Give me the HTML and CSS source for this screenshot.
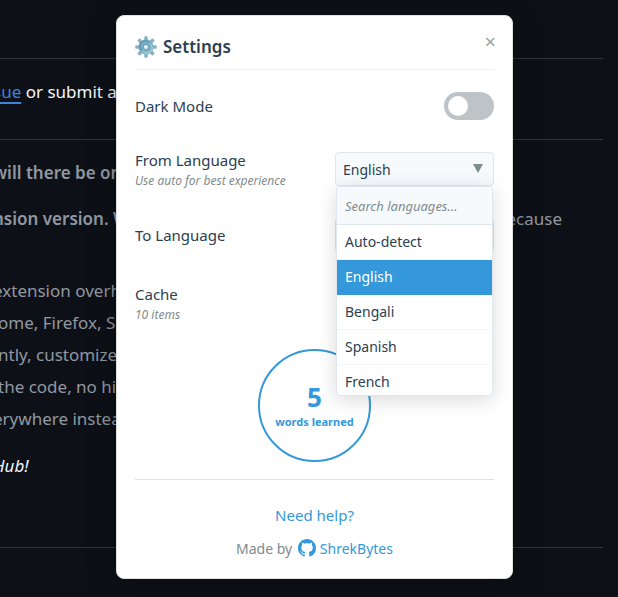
FILE: index.html
```html
<!DOCTYPE html>
<html lang="en">
<head>
<meta charset="utf-8">
<title>Settings</title>
<link rel="stylesheet" href="styles.css">
</head>
<body>
<main class="article">
  <hr>
  <p class="lead"><a href="#issue">sue</a> or submit a</p>
  <hr>
  <div class="quote">
    <p><strong>will there be on</strong></p>
    <p class="split"><strong>nsion version. W</strong><span>because</span></p>
    <ul>
      <li class="cut">extension overh</li>
      <li>ome, Firefox, S</li>
      <li>ntly, customize</li>
      <li>the code, no hid</li>
      <li class="cut">erywhere instea</li>
    </ul>
  </div>
  <p class="closing"><em>Hub!</em></p>
  <hr>
</main>
<div class="overlay">
  <section class="modal" role="dialog" aria-labelledby="title">
    <header class="header">
      <svg class="gear" viewBox="0 0 22 22" aria-hidden="true">
        <g fill="#82b2c6">
          <circle cx="11" cy="11" r="7.500"/>
          <g id="teeth"><path d="M9 5 9.500.3h3L13 5zM9 17l.5 4.700h3L13 17z"/><path d="M5 9 .3 9.500v3L5 13zM17 9l4.700.5v3L17 13z"/></g>
          <use href="#teeth" transform="rotate(45 11 11)"/>
        </g>
        <path d="M6.500 14A5.300 5.300 0 0 1 14 6.500" fill="none" stroke="#5a94ad" stroke-width="1.500"/>
        <path d="M15.500 8a5.300 5.300 0 0 1-7.500 7.500" fill="none" stroke="#a5cbd9" stroke-width="1.200"/>
        <circle cx="11" cy="11" r="3.500" fill="#6da3ba"/>
        <circle cx="11" cy="11" r="2" fill="#e8f2f6"/>
      </svg>
      <h1 id="title">Settings</h1>
      <button class="close" type="button" aria-label="Close">×</button>
    </header>
    <div class="rows">
      <div class="row">
        <label for="dark">Dark Mode</label>
        <input class="toggle" id="dark" type="checkbox" role="switch">
      </div>
      <div class="row">
        <div class="text">
          <label for="from">From Language</label>
          <small>Use auto for best experience</small>
        </div>
        <div class="picker">
          <select id="from"><option>English</option></select>
          <span class="arrow" aria-hidden="true"></span>
          <div class="menu">
            <input class="search" type="text" placeholder="Search languages..." aria-label="Search languages">
            <ul class="options" role="listbox" aria-label="Languages">
              <li role="option">Auto-detect</li>
              <li role="option" class="selected" aria-selected="true">English</li>
              <li role="option">Bengali</li>
              <li role="option">Spanish</li>
              <li role="option">French</li>
            </ul>
          </div>
        </div>
      </div>
      <div class="row">
        <label for="to">To Language</label>
        <div class="picker">
          <select id="to"></select>
        </div>
      </div>
      <div class="row cache">
        <div class="text">
          <span>Cache</span>
          <small>10 items</small>
        </div>
      </div>
    </div>
    <div class="stats">
      <strong>5</strong>
      <span>words learned</span>
    </div>
    <footer class="footer">
      <a href="#help">Need help?</a>
      <p>Made by
        <a href="#author"><svg viewBox="0 0 16 16" aria-hidden="true"><path fill="currentColor" d="M8 0C3.580 0 0 3.580 0 8c0 3.540 2.290 6.530 5.470 7.590.4.070.55-.17.55-.38 0-.19-.01-.82-.01-1.490-2.010.37-2.530-.49-2.690-.94-.09-.23-.48-.94-.82-1.130-.28-.15-.68-.52-.01-.53.63-.01 1.080.58 1.230.82.72 1.210 1.870.87 2.330.66.07-.52.28-.87.51-1.070-1.780-.2-3.640-.89-3.640-3.950 0-.87.31-1.590.82-2.150-.08-.2-.36-1.020.08-2.120 0 0 .67-.21 2.200.82.64-.18 1.320-.27 2-.27s1.360.09 2 .27c1.530-1.040 2.200-.82 2.200-.82.44 1.100.16 1.920.08 2.120.51.56.82 1.270.82 2.150 0 3.070-1.870 3.750-3.650 3.950.29.25.54.73.54 1.480 0 1.070-.01 1.930-.01 2.200 0 .21.15.46.55.38A8.010 8.010 0 0 0 16 8c0-4.420-3.580-8-8-8z"/></svg>ShrekBytes</a>
      </p>
    </footer>
  </section>
</div>
</body>
</html>
```

FILE: styles.css
```css
* { box-sizing: border-box; }
body {
  margin: 0;
  background: #0d1117;
  font-family: "Noto Sans", sans-serif;
  font-size: 15px;
  overflow: hidden;
}
p, h1, ul { margin: 0; padding: 0; list-style: none; font-weight: 400; }

.article {
  padding: 58px 15px 0 0;
  color: #f0f6fc;
  font-size: 17px;
  line-height: 32px;
  white-space: nowrap;
}
.article hr { height: 1px; margin: 0; border: 0; background: #30363d; }
.article p, .article .cut { margin-left: -7px; }
.article li { margin-left: -2px; }
.article a { color: #3f83dc; text-decoration-thickness: 2px; text-underline-offset: 4px; }
.lead { padding: 17px 0 31px; }
.quote { padding-top: 17px; color: #9198a1; }
.quote strong { font-weight: 600; }
.split { display: flex; justify-content: space-between; padding: 14px 41px 0 0; }
.quote ul { padding-top: 40px; }
.closing { padding: 15px 0 65px; }

.overlay {
  position: absolute;
  inset: 0;
  padding: 15px 105px 0 116px;
}
.modal {
  padding: 19px 18px 12px;
  border: 1px solid #e0e0e0;
  border-radius: 8px;
  background: #fff;
  color: #2c3e50;
  box-shadow: 0 8px 32px rgba(0, 0, 0, 0.3);
}
.header {
  display: flex;
  align-items: center;
  gap: 6px;
  height: 35px;
  padding-bottom: 10px;
  border-bottom: 1px solid #ecf0f1;
}
.gear { width: 22px; height: 22px; }
h1 { flex: 1; font-size: 17px; font-weight: 600; line-height: 24px; }
button { border: 0; background: none; font: inherit; }
.close { align-self: start; margin-right: -2px; padding: 0; color: #95a5a6; font-size: 20px; line-height: 14px; }

.rows { display: grid; gap: 28px; padding-top: 22px; }
.row { display: flex; justify-content: space-between; align-items: center; }
.cache { height: 46px; }
.text { display: flex; flex-direction: column; line-height: 24px; }
.row small { color: #7f8c8d; font-size: 12px; font-style: italic; line-height: 18px; }
.toggle {
  appearance: none;
  width: 50px;
  height: 28px;
  margin: 0;
  padding: 4px;
  border-radius: 14px;
  background: #bdc3c7;
}
.toggle::before {
  content: "";
  display: block;
  width: 20px;
  height: 20px;
  border-radius: 50%;
  background: #fff;
}
.picker { position: relative; width: 159px; }
select {
  appearance: none;
  display: block;
  width: 100%;
  height: 34px;
  padding: 0 7px;
  border: 1px solid #dfe6ee;
  border-radius: 4px;
  background: #f7fafd;
  color: #2c3e50;
  font: 14px "Noto Sans", sans-serif;
}
.arrow {
  position: absolute;
  top: 12px;
  right: 11px;
  border: 5px solid transparent;
  border-top: 9px solid #7f8c8d;
  border-bottom: 0;
}
.menu {
  position: absolute;
  z-index: 1;
  top: 34px;
  left: 1px;
  right: 1px;
  height: 210px;
  overflow: hidden;
  border: 1px solid #dfe6ee;
  border-radius: 4px;
  background: #fff;
  box-shadow: 0 4px 20px rgba(0, 0, 0, 0.15);
}
.search {
  display: block;
  width: 100%;
  height: 38px;
  padding: 0 8px;
  border: 0;
  border-bottom: 1px solid #dfe6ee;
  background: #f7fafd;
  font: italic 13px "Noto Sans", sans-serif;
}
.search::placeholder { color: #7f8c8d; }
.options li { padding: 0 8px; border-bottom: 1px solid #f4f6f7; font-size: 14px; line-height: 34px; }
.options .selected { border-color: #3498db; background: #3498db; color: #fff; }

.stats {
  display: flex;
  flex-direction: column;
  align-items: center;
  justify-content: center;
  width: 113px;
  height: 113px;
  margin: 23px auto 17px;
  border: 2px solid #3498db;
  border-radius: 50%;
  color: #3498db;
}
.stats strong { font-size: 26px; line-height: 32px; }
.stats span { font-size: 11px; font-weight: 700; line-height: 18px; }
.footer {
  padding-top: 18px;
  border-top: 1px solid #e0e0e0;
  color: #7f8c8d;
  text-align: center;
  line-height: 34px;
}
.footer a { color: #3498db; text-decoration: none; }
.footer p { font-size: 14px; }
.footer svg { width: 18px; height: 18px; margin: 0 4px 0 2px; vertical-align: -3px; }
```
